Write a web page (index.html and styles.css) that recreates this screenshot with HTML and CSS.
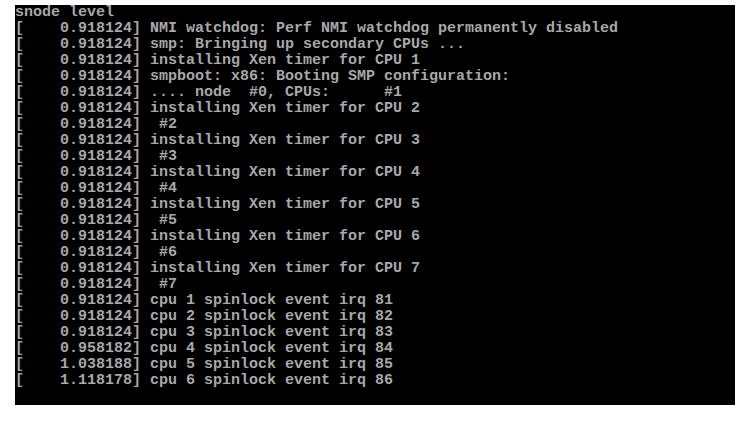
FILE: index.html
```html
<!DOCTYPE html>
<html>
<head>
<meta charset="utf-8">
<link rel="stylesheet" href="styles.css">
</head>
<body>
<div class="screen"><pre class="console">snode level
[    0.918124] NMI watchdog: Perf NMI watchdog permanently disabled
[    0.918124] smp: Bringing up secondary CPUs ...
[    0.918124] installing Xen timer for CPU 1
[    0.918124] smpboot: x86: Booting SMP configuration:
[    0.918124] .... node  #0, CPUs:      #1
[    0.918124] installing Xen timer for CPU 2
[    0.918124]  #2
[    0.918124] installing Xen timer for CPU 3
[    0.918124]  #3
[    0.918124] installing Xen timer for CPU 4
[    0.918124]  #4
[    0.918124] installing Xen timer for CPU 5
[    0.918124]  #5
[    0.918124] installing Xen timer for CPU 6
[    0.918124]  #6
[    0.918124] installing Xen timer for CPU 7
[    0.918124]  #7
[    0.918124] cpu 1 spinlock event irq 81
[    0.918124] cpu 2 spinlock event irq 82
[    0.918124] cpu 3 spinlock event irq 83
[    0.958182] cpu 4 spinlock event irq 84
[    1.038188] cpu 5 spinlock event irq 85
[    1.118178] cpu 6 spinlock event irq 86
</pre></div>
</body>
</html>
```
FILE: styles.css
```css
html, body {
  margin: 0;
  padding: 0;
  background: #ffffff;
}
body {
  padding: 5px 0 0 15px;
}
.screen {
  width: 720px;
  height: 400px;
  background: #000000;
  overflow: hidden;
}
.console {
  margin: 0;
  padding: 0;
  font-family: "Liberation Mono", "DejaVu Sans Mono", monospace;
  font-size: 15px;
  line-height: 16px;
  font-weight: bold;
  color: #a8a8a8;
  white-space: pre;
}
```
